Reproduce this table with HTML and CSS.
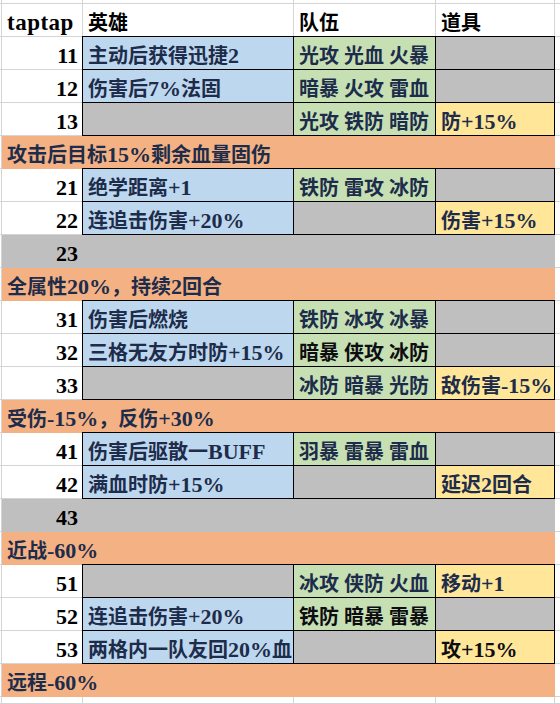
FILE: index.html
```html
<!DOCTYPE html>
<html lang="zh-CN">
<head>
<meta charset="utf-8">
<title>taptap</title>
<link rel="stylesheet" href="styles.css">
</head>
<body>
<div class="sheet">
  <div class="row top"><div class="gut"></div><div class="cell"></div><div class="cell"></div><div class="cell"></div><div class="cell"></div><div class="cell e"></div></div>

  <div class="row"><div class="gut"></div><div class="cell a hd">taptap</div><div class="cell h">英雄</div><div class="cell h">队伍</div><div class="cell h">道具</div><div class="cell e"></div></div>

  <div class="row"><div class="gut"></div><div class="cell a">11</div><div class="cell c blue">主动后获得迅捷<span class="n">2</span></div><div class="cell c green">光攻 光血 火暴</div><div class="cell c gray"></div><div class="cell e"></div></div>
  <div class="row"><div class="gut"></div><div class="cell a">12</div><div class="cell c blue">伤害后<span class="n">7%</span>法固</div><div class="cell c green">暗暴 火攻 雷血</div><div class="cell c gray"></div><div class="cell e"></div></div>
  <div class="row"><div class="gut"></div><div class="cell a">13</div><div class="cell c gray"></div><div class="cell c green">光攻 铁防 暗防</div><div class="cell c yellow">防<span class="n">+15%</span></div><div class="cell e"></div></div>
  <div class="row"><div class="gut"></div><div class="band">攻击后目标<span class="n">15%</span>剩余血量固伤</div><div class="cell e"></div></div>

  <div class="row"><div class="gut"></div><div class="cell a">21</div><div class="cell c blue">绝学距离<span class="n">+1</span></div><div class="cell c green">铁防 雷攻 冰防</div><div class="cell c gray"></div><div class="cell e"></div></div>
  <div class="row"><div class="gut"></div><div class="cell a">22</div><div class="cell c blue">连追击伤害<span class="n">+20%</span></div><div class="cell c gray"></div><div class="cell c yellow">伤害<span class="n">+15%</span></div><div class="cell e"></div></div>
  <div class="row"><div class="gut"></div><div class="ga">23</div><div class="gspan"></div><div class="cell e"></div></div>
  <div class="row"><div class="gut"></div><div class="band">全属性<span class="n">20%</span>，持续<span class="n">2</span>回合</div><div class="cell e"></div></div>

  <div class="row"><div class="gut"></div><div class="cell a">31</div><div class="cell c blue">伤害后燃烧</div><div class="cell c green">铁防 冰攻 冰暴</div><div class="cell c gray"></div><div class="cell e"></div></div>
  <div class="row"><div class="gut"></div><div class="cell a">32</div><div class="cell c blue">三格无友方时防<span class="n">+15%</span></div><div class="cell c green k">暗暴 侠攻 冰防</div><div class="cell c gray"></div><div class="cell e"></div></div>
  <div class="row"><div class="gut"></div><div class="cell a">33</div><div class="cell c gray"></div><div class="cell c green">冰防 暗暴 光防</div><div class="cell c yellow">敌伤害<span class="n">-15%</span></div><div class="cell e"></div></div>
  <div class="row"><div class="gut"></div><div class="band">受伤<span class="n">-15%</span>，反伤<span class="n">+30%</span></div><div class="cell e"></div></div>

  <div class="row"><div class="gut"></div><div class="cell a">41</div><div class="cell c blue">伤害后驱散一<span class="n">BUFF</span></div><div class="cell c green">羽暴 雷暴 雷血</div><div class="cell c gray"></div><div class="cell e"></div></div>
  <div class="row"><div class="gut"></div><div class="cell a">42</div><div class="cell c blue">满血时防<span class="n">+15%</span></div><div class="cell c gray"></div><div class="cell c yellow">延迟<span class="n">2</span>回合</div><div class="cell e"></div></div>
  <div class="row"><div class="gut"></div><div class="ga">43</div><div class="gspan"></div><div class="cell e"></div></div>
  <div class="row"><div class="gut"></div><div class="band">近战<span class="n">-60%</span></div><div class="cell e"></div></div>

  <div class="row"><div class="gut"></div><div class="cell a">51</div><div class="cell c gray"></div><div class="cell c green">冰攻 侠防 火血</div><div class="cell c yellow">移动<span class="n">+1</span></div><div class="cell e"></div></div>
  <div class="row"><div class="gut"></div><div class="cell a">52</div><div class="cell c blue">连追击伤害<span class="n">+20%</span></div><div class="cell c green k">铁防 暗暴 雷暴</div><div class="cell c gray"></div><div class="cell e"></div></div>
  <div class="row"><div class="gut"></div><div class="cell a">53</div><div class="cell c blue">两格内一队友回<span class="n">20%</span>血</div><div class="cell c gray"></div><div class="cell c yellow k">攻<span class="n">+15%</span></div><div class="cell e"></div></div>
  <div class="row"><div class="gut"></div><div class="band">远程<span class="n">-60%</span></div><div class="cell e"></div></div>

  <div class="row part"><div class="gut"></div><div class="cell"></div><div class="cell"></div><div class="cell"></div><div class="cell"></div><div class="cell e"></div></div>
</div>
</body>
</html>
```

FILE: styles.css
```css
html, body {
  margin: 0;
  padding: 0;
  background: #ffffff;
}

body {
  font-family: "Liberation Serif", "Noto Sans CJK SC", serif;
  font-size: 20px;
  font-weight: 700;
  color: #1d2c4a;
  overflow: hidden;
}

.sheet {
  width: 560px;
}

.row {
  display: grid;
  grid-template-columns: 2px 81px 211px 142px 119px 1fr;
  height: 33px;
}

.row.top {
  height: 4px;
}

.row.part {
  height: 7px;
}

.gut {
  box-sizing: border-box;
  border-right: 1px solid #d4d4d4;
  border-bottom: 1px solid #d4d4d4;
}

.cell {
  box-sizing: border-box;
  border-right: 1px solid #d4d4d4;
  border-bottom: 1px solid #d4d4d4;
  white-space: nowrap;
  overflow: hidden;
  padding: 5px 0 0 4px;
  line-height: 28px;
  min-width: 0;
}

.row.top .cell,
.row.part .cell {
  padding: 0;
}

.cell.e {
  border-right: none;
  padding: 0;
}

.n {
  font-size: 22px;
}

.cell.a {
  text-align: right;
  padding: 5px 4px 0 0;
  color: #000000;
  font-size: 22px;
}

.cell.hd {
  text-align: left;
  padding-left: 5px;
  font-size: 23px;
  letter-spacing: 0.5px;
}

.cell.h {
  color: #000000;
  padding-left: 5px;
}

.cell.c {
  border: 1px solid #000000;
  margin: -1px 0 0 -1px;
  padding-left: 5px;
}

.blue { background: #bdd7ee; }
.green { background: #c6e0b4; }
.gray { background: #bfbfbf; }
.yellow { background: #ffe699; }

.k { color: #0d0d12; }

.band {
  grid-column: 2 / 6;
  background: #f4b183;
  white-space: nowrap;
  overflow: hidden;
  padding: 5px 0 0 5px;
  line-height: 28px;
}

.ga {
  background: #bfbfbf;
  text-align: right;
  padding: 5px 5px 0 0;
  line-height: 28px;
  color: #000000;
  font-size: 22px;
}

.gspan {
  grid-column: 3 / 6;
  background: #bfbfbf;
}
```
